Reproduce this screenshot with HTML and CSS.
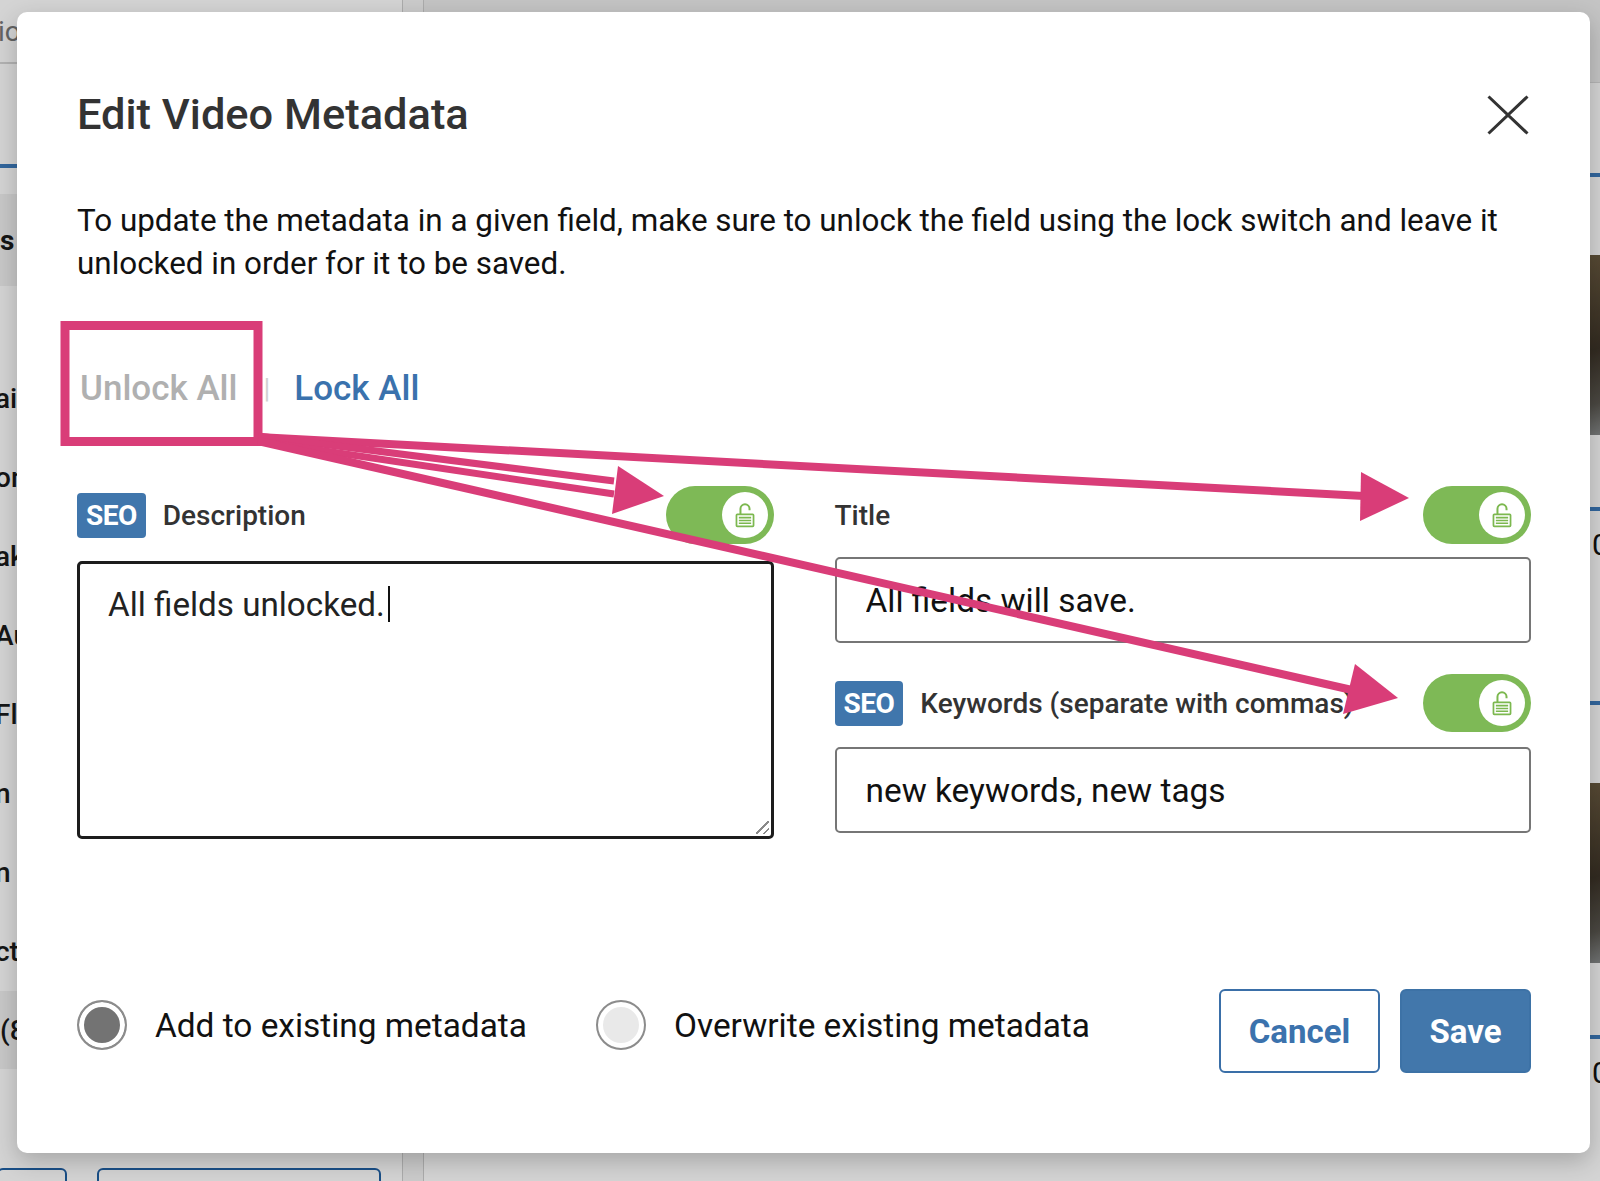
FILE: index.html
```html
<!DOCTYPE html>
<html lang="en">
<head>
    <meta charset="UTF-8">
    <meta name="viewport" content="width=device-width, initial-scale=1.0">
    <title>Edit Video Metadata</title>
    <link rel="stylesheet" href="styles.css">
</head>
<body>
    <div class="page">
        <aside class="sidebar">
            <div class="sb-head">io</div>
            <div class="sb-tabs"></div>
            <div class="sb-group">s</div>
            <ul class="sb-list">
                <li>ain</li>
                <li>on</li>
                <li>ak</li>
                <li>Au</li>
                <li>Fl</li>
                <li>n I</li>
                <li>n M</li>
                <li>ct</li>
            </ul>
            <div class="sb-group sb-group-foot">(8</div>
            <div class="sb-buttons">
                <span class="sb-btn sb-btn-small"></span>
                <span class="sb-btn"></span>
            </div>
        </aside>
        <div class="divider"></div>
        <main class="library">
            <div class="library-head"></div>
            <div class="cards">
                <div class="card"><div class="card-thumb"></div><div class="card-bar"></div><div class="card-meta">0:32</div></div>
                <div class="card"><div class="card-thumb"></div><div class="card-bar"></div><div class="card-meta">0:32</div></div>
                <div class="card"><div class="card-thumb"></div><div class="card-bar"></div><div class="card-meta">0:32</div></div>
                <div class="card"><div class="card-thumb"></div><div class="card-bar"></div><div class="card-meta">0:32</div></div>
                <div class="card"><div class="card-thumb"></div><div class="card-bar"></div><div class="card-meta">0:47</div></div>
                <div class="card"><div class="card-thumb"></div><div class="card-bar"></div><div class="card-meta">0:47</div></div>
                <div class="card"><div class="card-thumb"></div><div class="card-bar"></div><div class="card-meta">0:47</div></div>
                <div class="card"><div class="card-thumb"></div><div class="card-bar"></div><div class="card-meta">0:47</div></div>
            </div>
        </main>
    </div>

    <div class="backdrop"></div>

    <div class="modal">
        <div class="modal-header">
            <h2>Edit Video Metadata</h2>
            <button class="close" aria-label="Close">
                <svg width="42" height="40" viewBox="0 0 42 40"><path d="M1.5 1.5 L40.5 38.5 M40.5 1.5 L1.5 38.5" stroke="#333" stroke-width="3" fill="none"/></svg>
            </button>
        </div>

        <p class="intro">To update the metadata in a given field, make sure to unlock the field using the lock switch and leave it unlocked in order for it to be saved.</p>

        <div class="bulk-links">
            <a class="link link-disabled">Unlock All</a>
            <span class="sep">|</span>
            <a class="link">Lock All</a>
        </div>

        <div class="fields">
            <div class="field-col">
                <div class="field-head">
                    <span class="seo">SEO</span>
                    <label class="field-label">Description</label>
                    <span class="toggle"><span class="knob">
                        <svg width="32" height="32" viewBox="0 0 24 24"><path d="M8.6 11.5V7.4a3.4 3.4 0 0 1 6.8 0v1" fill="none" stroke="#7cb84f" stroke-width="1.5"/><rect x="5.6" y="11.5" width="12.8" height="9" rx="0.6" fill="none" stroke="#7cb84f" stroke-width="1.3"/><path d="M7.4 14h9.2M7.4 16.1h9.2M7.4 18.2h9.2" stroke="#7cb84f" stroke-width="1.2"/></svg>
                    </span></span>
                </div>
                <div class="editor">All fields unlocked.<span class="caret"></span></div>
            </div>

            <div class="field-col">
                <div class="field-head">
                    <label class="field-label field-label-plain">Title</label>
                    <span class="toggle"><span class="knob">
                        <svg width="32" height="32" viewBox="0 0 24 24"><path d="M8.6 11.5V7.4a3.4 3.4 0 0 1 6.8 0v1" fill="none" stroke="#7cb84f" stroke-width="1.5"/><rect x="5.6" y="11.5" width="12.8" height="9" rx="0.6" fill="none" stroke="#7cb84f" stroke-width="1.3"/><path d="M7.4 14h9.2M7.4 16.1h9.2M7.4 18.2h9.2" stroke="#7cb84f" stroke-width="1.2"/></svg>
                    </span></span>
                </div>
                <input class="input input-title" type="text" value="All fields will save." readonly>

                <div class="field-head field-head-next">
                    <span class="seo">SEO</span>
                    <label class="field-label">Keywords (separate with commas)</label>
                    <span class="toggle"><span class="knob">
                        <svg width="32" height="32" viewBox="0 0 24 24"><path d="M8.6 11.5V7.4a3.4 3.4 0 0 1 6.8 0v1" fill="none" stroke="#7cb84f" stroke-width="1.5"/><rect x="5.6" y="11.5" width="12.8" height="9" rx="0.6" fill="none" stroke="#7cb84f" stroke-width="1.3"/><path d="M7.4 14h9.2M7.4 16.1h9.2M7.4 18.2h9.2" stroke="#7cb84f" stroke-width="1.2"/></svg>
                    </span></span>
                </div>
                <input class="input input-keywords" type="text" value="new keywords, new tags" readonly>
            </div>
        </div>

        <div class="modal-footer">
            <label class="radio"><span class="radio-dot radio-checked"></span>Add to existing metadata</label>
            <label class="radio radio-second"><span class="radio-dot"></span>Overwrite existing metadata</label>
            <div class="actions">
                <button class="btn btn-outline">Cancel</button>
                <button class="btn btn-primary">Save</button>
            </div>
        </div>
    </div>

    <!-- annotation drawn on top of the screenshot -->
    <svg class="annotations" width="1600" height="1181" viewBox="0 0 1600 1181">
        <g fill="#d93d78" stroke="#d93d78">
            <rect x="65" y="325.5" width="193" height="116" fill="none" stroke-width="9"/>
            <line x1="258" y1="437" x2="1364" y2="496" stroke-width="8"/>
            <polygon points="1361,472 1409,498 1360,521" stroke="none"/>
            <line x1="258" y1="436" x2="614" y2="481" stroke-width="7"/>
            <line x1="258" y1="441" x2="614" y2="494" stroke-width="7"/>
            <polygon points="618,466 664,496 612,514" stroke="none"/>
            <line x1="258" y1="441" x2="1352" y2="690" stroke-width="8"/>
            <polygon points="1355,664 1398,698 1343,714" stroke="none"/>
        </g>
    </svg>
</body>
</html>
```

FILE: styles.css
```css
* {
    box-sizing: border-box;
}

html, body {
    margin: 0;
    padding: 0;
}

body {
    width: 1600px;
    height: 1181px;
    overflow: hidden;
    position: relative;
    font-family: Roboto, "Liberation Sans", Arial, sans-serif;
    color: #111;
    background: #fff;
}

/* page behind the dialog */
.page {
    display: flex;
    height: 100%;
}

.sidebar {
    width: 402px;
    flex: none;
    background: #fff;
    font-size: 28px;
    color: #1a1a1a;
}

.sb-head {
    height: 64px;
    border-bottom: 2px solid #d6d6d6;
    display: flex;
    align-items: center;
    color: #777;
    text-indent: -2px;
}

.sb-tabs {
    height: 104px;
    border-bottom: 4px solid #3d7bbd;
}

.sb-group {
    margin-top: 26px;
    height: 92px;
    background: #f1f1f1;
    display: flex;
    align-items: center;
    font-weight: 700;
}

.sb-list {
    list-style: none;
    margin: 73px 0 0;
    padding: 0;
    text-indent: -5px;
}

.sb-list li {
    height: 79px;
    display: flex;
    align-items: center;
    font-weight: 500;
}

.sb-group-foot {
    margin-top: 0;
    height: 78px;
    font-weight: 500;
}

.sb-buttons {
    margin-top: 99px;
    display: flex;
    gap: 30px;
}

.sb-btn {
    display: block;
    width: 284px;
    height: 44px;
    border: 2px solid #1f5fa3;
    border-radius: 6px;
}

.sb-btn-small {
    width: 70px;
    margin-left: -3px;
}

.divider {
    width: 22px;
    flex: none;
    background: #f4f4f4;
    border-left: 1px solid #cfcfcf;
    border-right: 1px solid #cfcfcf;
}

.library {
    flex: 1;
    overflow: hidden;
    background: #fff;
}

.library-head {
    height: 83px;
    background: #ececec;
    border-bottom: 1px solid #dadada;
}

.cards {
    display: grid;
    grid-template-columns: repeat(4, 352px);
    gap: 28px;
    padding: 90px 0 0 24px;
}

.card {
    height: 500px;
    border-top: 4px solid #3d7bbd;
}

.card-thumb {
    margin-top: 78px;
    height: 180px;
    background: linear-gradient(165deg, #6a5a40 0%, #3d3428 35%, #5a5750 55%, #a9b0b5 75%, #d5dade 100%);
}

.card-bar {
    margin-top: 72px;
    height: 4px;
    background: #3d7bbd;
}

.card-meta {
    margin-top: 14px;
    padding-left: 4px;
    font-size: 30px;
    line-height: 40px;
}

.backdrop {
    position: absolute;
    inset: 0;
    background: rgba(0, 0, 0, 0.17);
}

/* dialog */
.modal {
    position: absolute;
    left: 17px;
    top: 12px;
    width: 1573px;
    height: 1141px;
    background: #fff;
    border-radius: 10px;
    box-shadow: 0 8px 24px rgba(0, 0, 0, 0.22);
    padding: 77px 59px 80px 60px;
    display: flex;
    flex-direction: column;
}

.modal-header {
    display: flex;
    align-items: center;
    justify-content: space-between;
    height: 52px;
}

.modal-header h2 {
    margin: 0;
    font-size: 43.4px;
    line-height: 52px;
    font-weight: 500;
    color: #333;
}

.close {
    background: none;
    border: 0;
    padding: 0;
    margin-right: 2px;
    display: flex;
}

.intro {
    margin: 58px 0 0;
    font-size: 31.4px;
    line-height: 43px;
    color: #111;
}

.bulk-links {
    margin-top: 84px;
    padding-left: 3px;
    font-size: 35px;
    line-height: 40px;
    font-weight: 500;
    display: flex;
    align-items: center;
}

.link {
    color: #3a72ad;
}

.link-disabled {
    color: #b0b0b0;
}

.sep {
    margin: 0 24px 0 26px;
    color: #d2d2d2;
    font-weight: 400;
    font-size: 28px;
}

.fields {
    margin-top: 77px;
    display: grid;
    grid-template-columns: 1fr 1fr;
    column-gap: 61px;
}

.field-head {
    height: 58px;
    display: flex;
    align-items: center;
}

.field-head-next {
    margin-top: 31px;
}

.seo {
    height: 45px;
    padding: 0 9px;
    display: flex;
    align-items: center;
    background: #4076ac;
    color: #fff;
    border-radius: 4px;
    font-size: 28px;
    font-weight: 700;
    letter-spacing: -0.5px;
}

.field-label {
    margin-left: 17px;
    font-size: 28px;
    font-weight: 500;
    color: #333;
}

.field-label-plain {
    margin-left: 0;
}

.toggle {
    margin-left: auto;
    width: 108px;
    height: 58px;
    border-radius: 29px;
    background: #7eb956;
    display: flex;
    align-items: center;
    justify-content: flex-end;
    padding-right: 6px;
}

.knob {
    width: 46px;
    height: 46px;
    border-radius: 50%;
    background: #fff;
    display: flex;
    align-items: center;
    justify-content: center;
}

.editor {
    position: relative;
    margin-top: 17px;
    height: 278px;
    border: 3px solid #1c1c1c;
    border-radius: 5px;
    padding: 21px 28px;
    font-size: 33.2px;
    color: #222;
}

.caret {
    display: inline-block;
    width: 2px;
    height: 36px;
    margin-left: 3px;
    background: #111;
    vertical-align: -6px;
}

.editor::after {
    content: "";
    position: absolute;
    right: 2px;
    bottom: 2px;
    width: 13px;
    height: 13px;
    background: linear-gradient(135deg, transparent 46%, #8a8a8a 46%, #8a8a8a 54%, transparent 54%, transparent 74%, #8a8a8a 74%, #8a8a8a 82%, transparent 82%);
}

.input {
    display: block;
    width: 100%;
    height: 86px;
    border: 2px solid #767676;
    border-radius: 5px;
    padding: 0 29px;
    font: inherit;
    font-size: 33.4px;
    color: #111;
    background: #fff;
    outline: none;
}

.input-title {
    margin-top: 13px;
}

.input-keywords {
    margin-top: 15px;
}

.modal-footer {
    margin-top: auto;
    height: 84px;
    display: flex;
    align-items: center;
}

.radio {
    display: flex;
    align-items: center;
    gap: 28px;
    font-size: 33.4px;
    color: #111;
    margin-top: -12px;
}

.radio-second {
    margin-left: 69px;
}

.radio-dot {
    width: 50px;
    height: 50px;
    border-radius: 50%;
    border: 2px solid #8c8c8c;
    background: #e9e9e9;
    box-shadow: inset 0 0 0 5px #fff;
}

.radio-checked {
    background: #737373;
}

.actions {
    margin-left: auto;
    display: flex;
    gap: 20px;
}

.btn {
    height: 84px;
    border-radius: 6px;
    font: inherit;
    font-size: 33px;
    font-weight: 700;
    cursor: pointer;
}

.btn-outline {
    width: 161px;
    background: #fff;
    border: 2px solid #3a6fa8;
    color: #3b72ad;
}

.btn-primary {
    width: 131px;
    background: #4277ab;
    border: 2px solid #3d72a6;
    color: #fff;
}

.annotations {
    position: absolute;
    left: 0;
    top: 0;
    pointer-events: none;
}
```
